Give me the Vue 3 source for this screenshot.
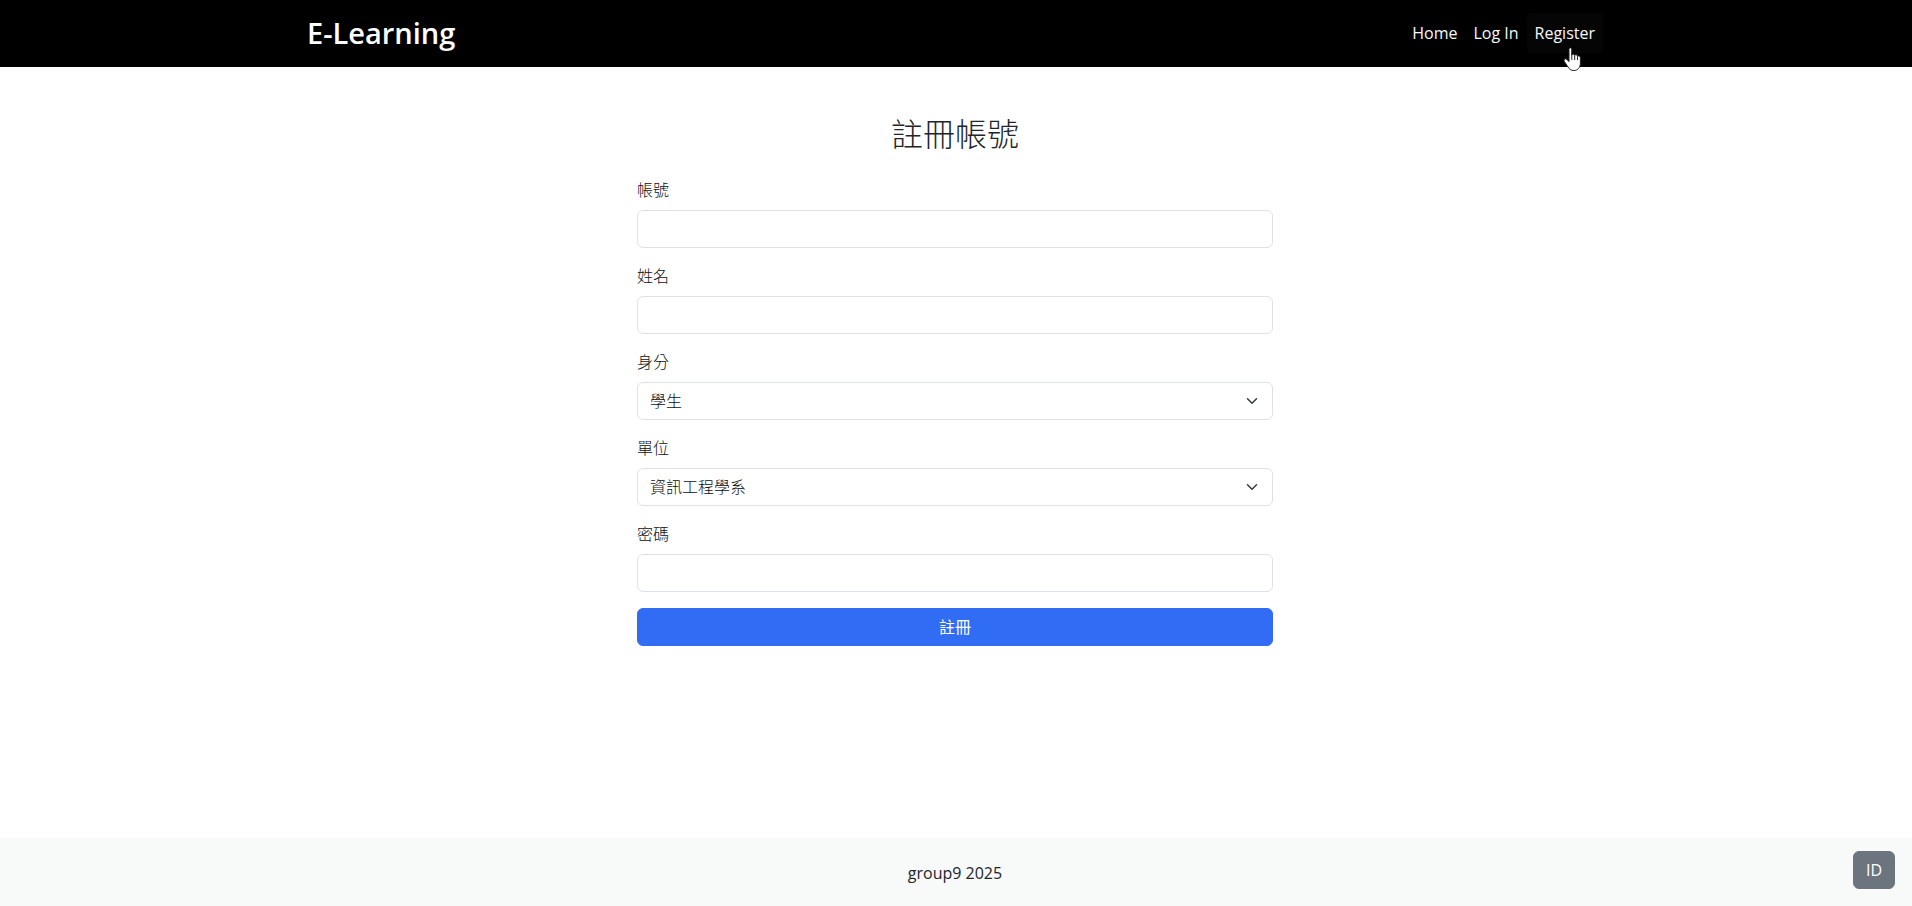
<script setup>
import { ref } from 'vue'

const account = ref('')
const fullName = ref('')
const role = ref('學生')
const unit = ref('資訊工程學系')
const password = ref('')
</script>

<template>
  <div class="page">
    <header class="navbar">
      <div class="container">
        <a class="brand" href="#">E-Learning</a>
        <nav class="links">
          <a href="#home">Home</a>
          <a href="#login">Log In</a>
          <a class="active" href="#register">Register</a>
        </nav>
      </div>
      <svg class="pointer" width="20" height="25" viewBox="0 0 20 25" aria-hidden="true">
        <path
          d="M6 2.4C6 .4 8.700 .4 8.700 2.400V8.200C9.200 6.700 11.500 7 11.600 8.400C12.500 7.300 14.400 7.800 14.500 9.200C15.700 8.500 17.400 9.200 17.400 10.800V16C17.400 20.600 14.700 23.500 10.900 23.500C7.900 23.500 6.200 22.200 4.700 19.500L1.200 14.200C.2 12.300 2.600 11.100 3.800 12.400L6 14.600Z"
          fill="#fff" stroke="#222" stroke-width="1" stroke-linejoin="round"
        />
        <path d="M8.800 8v5M11.700 8.500V13M14.500 9.300V13" stroke="#222" stroke-width="1" fill="none" />
      </svg>
    </header>

    <main>
      <form class="form" @submit.prevent>
        <h1>註冊帳號</h1>
        <div class="field">
          <label for="account">帳號</label>
          <input id="account" v-model="account" type="text" />
        </div>
        <div class="field">
          <label for="name">姓名</label>
          <input id="name" v-model="fullName" type="text" />
        </div>
        <div class="field">
          <label for="role">身分</label>
          <div class="select">
            <select id="role" v-model="role">
              <option>學生</option>
            </select>
            <svg width="16" height="12" viewBox="0 0 16 16" aria-hidden="true"><path d="m2 5 6 6 6-6" /></svg>
          </div>
        </div>
        <div class="field">
          <label for="unit">單位</label>
          <div class="select">
            <select id="unit" v-model="unit">
              <option>資訊工程學系</option>
            </select>
            <svg width="16" height="12" viewBox="0 0 16 16" aria-hidden="true"><path d="m2 5 6 6 6-6" /></svg>
          </div>
        </div>
        <div class="field">
          <label for="password">密碼</label>
          <input id="password" v-model="password" type="password" />
        </div>
        <button class="submit" type="submit">註冊</button>
      </form>
    </main>

    <footer>group9 2025</footer>
    <button class="badge" type="button">ID</button>
  </div>
</template>

<style>
body {
  margin: 0;
}
</style>

<style scoped>
.page,
.page * {
  box-sizing: border-box;
}
.page {
  display: flex;
  flex-direction: column;
  min-height: 100vh;
  background: #fff;
  color: #212529;
  font-family: "Open Sans", "Noto Sans CJK TC", sans-serif;
  font-size: 16px;
  line-height: 24px;
}
.navbar,
main,
footer {
  padding-right: 2px;
}
.navbar {
  position: relative;
  background: #000;
}
.container {
  display: flex;
  align-items: center;
  justify-content: space-between;
  max-width: 1320px;
  min-height: 67px;
  margin: 0 auto;
  padding: 0 12px 2px;
}
.brand {
  color: #fff;
  font-size: 29px;
  font-weight: 600;
  line-height: 42px;
  text-decoration: none;
}
.links {
  display: flex;
}
.links a {
  padding: 8px;
  border-radius: 4px;
  color: #f8f9fa;
  font-size: 16px;
  text-decoration: none;
}
.links .active {
  background: #050505;
}
.pointer {
  position: absolute;
  top: 47px;
  left: calc(50% + 607px);
}
main {
  flex: 1;
}
.form {
  width: 100%;
  max-width: 636px;
  margin: 0 auto;
  padding: 48px 0;
}
h1 {
  margin: 0 0 26px;
  font-size: 32px;
  font-weight: 300;
  line-height: 37px;
  text-align: center;
}
.field {
  margin-bottom: 16px;
}
label {
  display: block;
  width: fit-content;
  margin-bottom: 8px;
  color: #0c0e10;
  font-weight: 300;
}
input,
select {
  display: block;
  width: 100%;
  height: 38px;
  padding: 6px 12px;
  border: 1px solid #dee2e6;
  border-radius: 6px;
  background: #fff;
  color: #0c0e10;
  font: inherit;
  font-weight: 300;
  appearance: none;
}
.select {
  position: relative;
}
.select svg {
  position: absolute;
  top: 13px;
  right: 13px;
  pointer-events: none;
}
.select path {
  fill: none;
  stroke: #343a40;
  stroke-width: 2;
  stroke-linecap: round;
  stroke-linejoin: round;
}
.submit,
.badge {
  height: 38px;
  padding: 6px 12px;
  border: 1px solid;
  border-radius: 6px;
  color: #fff;
  font: inherit;
  cursor: pointer;
}
.submit {
  width: 100%;
  border-color: #316cf4;
  background: #316cf4;
}
footer {
  padding-top: 23px;
  padding-bottom: 21px;
  background: #f8f9f9;
  text-align: center;
}
.badge {
  position: fixed;
  right: 17px;
  bottom: 17px;
  border-color: #6c757d;
  background: #6c757d;
}
</style>
